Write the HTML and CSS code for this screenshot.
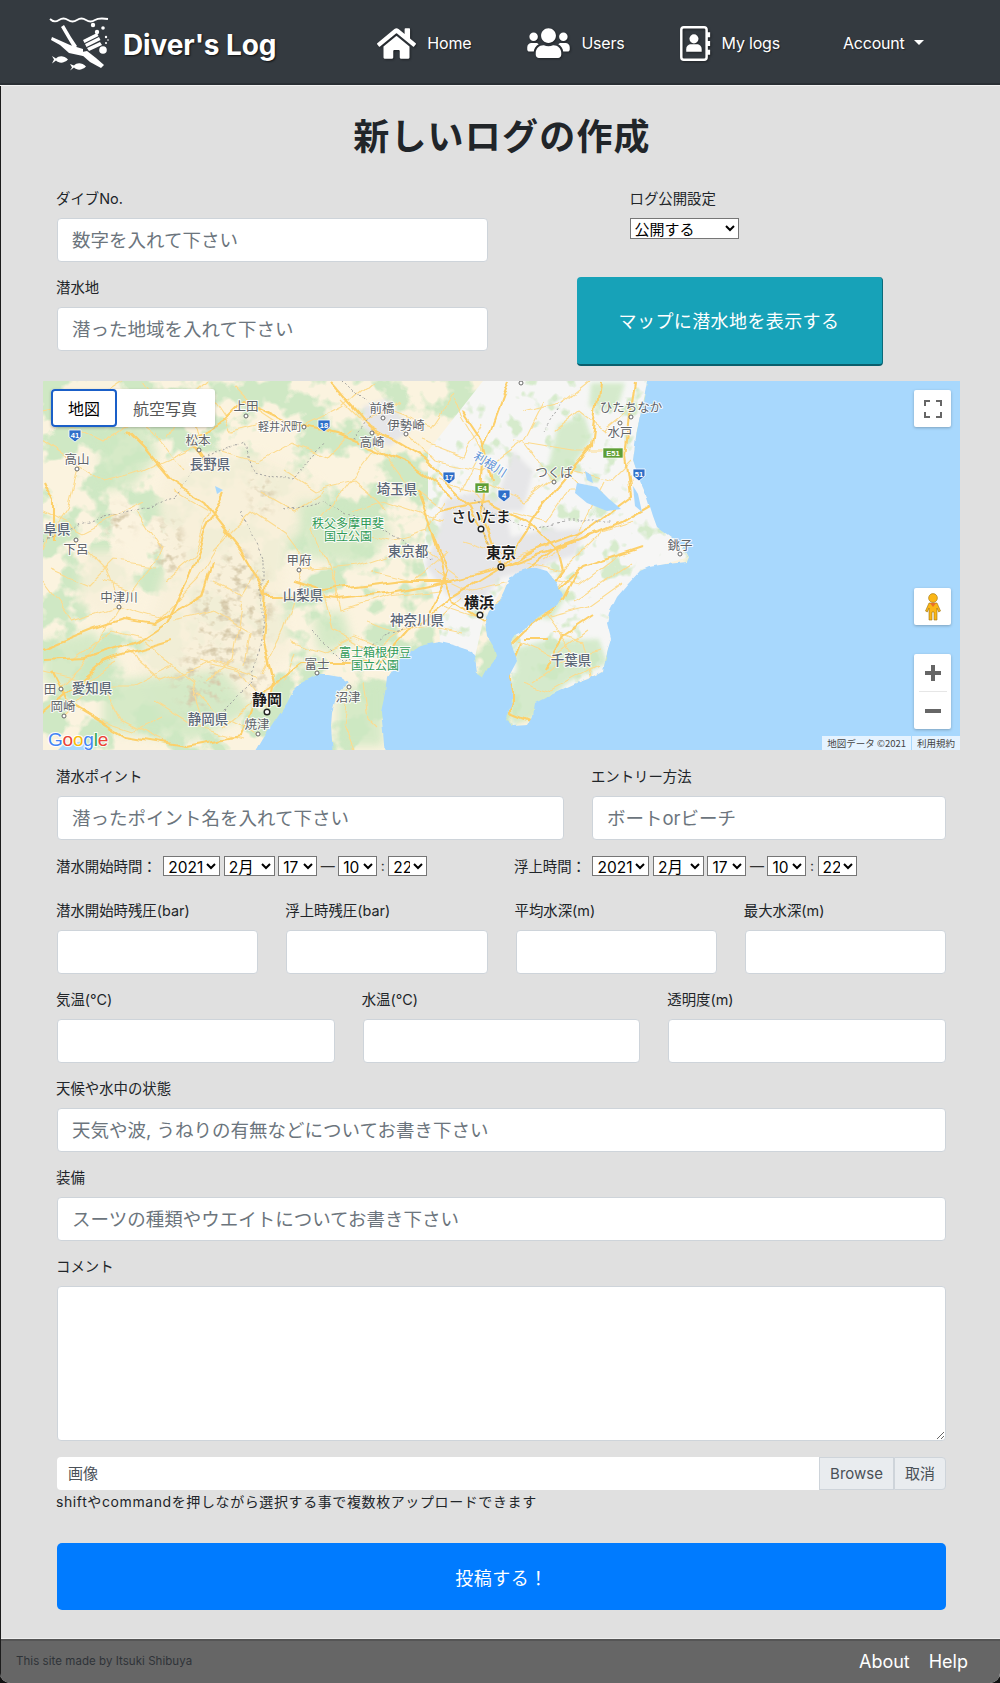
FILE: index.html
```html
<!DOCTYPE html>
<html lang="ja">
<head>
<meta charset="utf-8">
<title>Diver's Log</title>
<link rel="stylesheet" href="styles.css">
</head>
<body>
<div class="page">
<header class="nav">
  <a class="brand">
    <svg class="logo" viewBox="0 0 62 56">
      <path class="logo-wave" d="M2 4c3 3 6 3 9 1s6-2 9 0 6 2 9 0 6-2 9 0 6 2 9 0 6-2 13-1"/>
      <g class="logo-fill">
        <circle cx="45" cy="10" r="2.2"/><circle cx="55" cy="13" r="1.8"/><circle cx="49" cy="17" r="2.2"/><circle cx="58" cy="22" r="1.2"/><circle cx="58" cy="28" r="1"/><circle cx="60" cy="25" r=".8"/>
        <circle cx="55" cy="35" r="3.8"/>
        <path d="M13 12l3-2 7 12 6 9-3 3-6-10z"/>
        <path d="M3 25l1-3 18 8 13 4 0 7-14-3-9-8z"/>
        <path d="M35 25l14-7 1.500 3-14 7zM37 29l14-7 1.500 3-14 7zM39 33l13-6 2 3-13 6z"/>
        <path d="M34 37l5-1 9 7 8 7-3 3-11-6-8-7z"/>
        <path d="M4 41l4 2.500c3-3 8-3 12 1-4 4-9 4-12 1l-4 3 2-4z"/>
        <path d="M22 49l4 1.500c3-3 8-3 12 1-4 4-9 4-12 1l-4 3 2-3z"/>
      </g>
    </svg>
    <span class="brand-name">Diver's Log</span>
  </a>
  <nav class="nav-links">
    <a class="nav-item nav-home">
      <svg class="icon-home" viewBox="0 0 576 512"><path d="M280.37 148.26L96 300.11V464a16 16 0 0 0 16 16l112.06-.29a16 16 0 0 0 15.92-16V368a16 16 0 0 1 16-16h64a16 16 0 0 1 16 16v95.64a16 16 0 0 0 16 16.05L464 480a16 16 0 0 0 16-16V300L295.67 148.26a12.19 12.19 0 0 0-15.3 0zM571.6 251.47L488 182.56V44.05a12 12 0 0 0-12-12h-56a12 12 0 0 0-12 12v72.61L318.47 43a48 48 0 0 0-61 0L4.34 251.47a12 12 0 0 0-1.6 16.9l25.5 31A12 12 0 0 0 45.15 301l235.22-193.74a12.19 12.19 0 0 1 15.3 0L530.9 301a12 12 0 0 0 16.9-1.6l25.5-31a12 12 0 0 0-1.7-16.93z"/></svg>
      <span>Home</span>
    </a>
    <a class="nav-item nav-users">
      <svg class="icon-users" viewBox="0 0 640 512"><path d="M96 224c35.3 0 64-28.7 64-64s-28.7-64-64-64-64 28.7-64 64 28.7 64 64 64zm448 0c35.3 0 64-28.7 64-64s-28.7-64-64-64-64 28.7-64 64 28.7 64 64 64zm32 32h-64c-17.6 0-33.5 7.1-45.1 18.6 40.3 22.1 68.9 62 75.1 109.4h66c17.7 0 32-14.3 32-32v-32c0-35.3-28.7-64-64-64zm-256 0c61.9 0 112-50.1 112-112S381.9 32 320 32 208 82.1 208 144s50.1 112 112 112zm76.8 32h-8.3c-20.8 10-43.9 16-68.5 16s-47.6-6-68.5-16h-8.3C179.6 288 128 339.6 128 403.2V432c0 26.5 21.5 48 48 48h288c26.5 0 48-21.5 48-48v-28.8c0-63.6-51.6-115.2-115.2-115.2zm-223.7-13.4C161.5 263.1 145.6 256 128 256H64c-35.3 0-64 28.7-64 64v32c0 17.7 14.3 32 32 32h65.9c6.3-47.4 34.9-87.3 75.2-109.4z"/></svg>
      <span>Users</span>
    </a>
    <a class="nav-item nav-logs">
      <svg class="icon-logs" viewBox="0 0 30 34">
        <rect class="book" x="1.2" y="1.2" width="24.6" height="31.6" rx="2.5"/>
        <path d="M26 6h3.200v5H26zM26 14.500h3.200v5H26zM26 23h3.200v5H26z"/>
        <circle cx="13.500" cy="12.500" r="4.400"/>
        <path d="M6 25v-2.500c0-3 2.400-4.700 4.600-4.700h5.800c2.200 0 4.600 1.700 4.600 4.700V25z"/>
      </svg>
      <span>My logs</span>
    </a>
    <a class="nav-item nav-account"><span>Account</span><i class="caret"></i></a>
  </nav>
</header>

<main class="content">
  <h1 class="title">新しいログの作成</h1>
  <form class="log-form">
    <div class="top-grid">
      <div class="top-left">
        <div class="field"><label class="lbl">ダイブNo.</label><input class="ctl" placeholder="数字を入れて下さい"></div>
        <div class="field"><label class="lbl">潜水地</label><input class="ctl" placeholder="潜った地域を入れて下さい"></div>
      </div>
      <div class="top-right">
        <div class="publish"><label class="lbl">ログ公開設定</label><select class="sel-publish"><option>公開する</option><option>公開しない</option></select></div>
        <button type="button" class="map-btn">マップに潜水地を表示する</button>
      </div>
    </div>

    <div class="map">
      <svg class="map-svg" viewBox="0 0 917 369" preserveAspectRatio="none">
        <defs>
          <filter id="soft" x="-10%" y="-10%" width="120%" height="120%"><feGaussianBlur stdDeviation="5"/></filter>
          <filter id="softer" x="-10%" y="-10%" width="120%" height="120%"><feGaussianBlur stdDeviation="2"/></filter>
          <filter id="patches" x="0" y="0" width="100%" height="100%" color-interpolation-filters="sRGB">
            <feTurbulence type="fractalNoise" baseFrequency="0.028" numOctaves="4" seed="11"/>
            <feColorMatrix values="0 0 0 0 .81  0 0 0 0 .91  0 0 0 0 .77  9 0 0 0 -4.3"/>
          </filter>
          <filter id="patches-east" x="0" y="0" width="100%" height="100%" color-interpolation-filters="sRGB">
            <feTurbulence type="fractalNoise" baseFrequency="0.05" numOctaves="3" seed="4"/>
            <feColorMatrix values="0 0 0 0 .84  0 0 0 0 .92  0 0 0 0 .80  9 0 0 0 -5.3"/>
          </filter>
          <filter id="ridges" x="0" y="0" width="100%" height="100%" color-interpolation-filters="sRGB">
            <feTurbulence type="fractalNoise" baseFrequency="0.09 0.12" numOctaves="3" seed="3"/>
            <feColorMatrix values="0 0 0 0 .84  0 0 0 0 .79  0 0 0 0 .67  4 0 0 0 -2"/>
          </filter>
          <filter id="wiggle" x="-2%" y="-2%" width="104%" height="104%">
            <feTurbulence type="fractalNoise" baseFrequency="0.035" numOctaves="2" seed="9" result="n"/>
            <feDisplacementMap in="SourceGraphic" in2="n" scale="12" xChannelSelector="R" yChannelSelector="G"/>
          </filter>
          <filter id="coast" x="-2%" y="-2%" width="104%" height="104%">
            <feTurbulence type="fractalNoise" baseFrequency="0.09" numOctaves="2" seed="2" result="n"/>
            <feDisplacementMap in="SourceGraphic" in2="n" scale="4" xChannelSelector="R" yChannelSelector="G"/>
          </filter>
          <mask id="ridge-mask"><path class="mask-w" filter="url(#soft)" d="M165 190l30-25 25 25 10 45-20 50-35 35-30 10-15-30 20-40 5-40zM112 140l22 0 10 35-15 20-20-15zM205 90l25 10 0 30-20 0zM60 130l25-5 5 25-20 10zM200 300l30-10 0 20-25 10z"/></mask>
          <mask id="east-mask"><path class="mask-w" d="M385 70L440 0H605L594 49 590 79 604 116 628 156 646 176 597 190 565 268 560 290 534 302 500 318 470 345 468 262 464 200 440 240 432 276 397 261 395 230 380 180 385 120z"/></mask>
        </defs>
        <rect class="m-land" width="917" height="369"/>
        <rect class="m-noise" filter="url(#patches)" width="917" height="369"/>
        <path class="m-cream" filter="url(#soft)" d="M125 80l90 -10 60 30 10 40-40 20-5 60 10 50-60 50-70 20-25-50 10-50 20-60-10-60zM40 170l40 0 15 40-30 30-30-20z"/>
        <path class="m-greenb" filter="url(#soft)" d="M55 45l45-10 15 40-25 30-30 5zM255 120l70 5 25 25-30 35-60-10zM270 235l30-5 10 35-35 5zM60 300l120 -10 30 40-60 30-90 -10zM295 310l45 -10 0 65-45 0zM0 260l50-10 30 40-50 20-30-10z"/>
        <rect class="m-noise2" filter="url(#ridges)" mask="url(#ridge-mask)" width="917" height="369"/>
        <path class="m-east" d="M385 70L440 0H605L594 49 590 79 604 116 628 156 646 176 597 190 565 268 560 290 534 302 500 318 470 345 468 262 464 200 440 240 432 276 397 261 395 230 380 180 385 120z"/>
        <g mask="url(#east-mask)"><rect class="m-noise" filter="url(#patches-east)" width="917" height="369"/></g>
        <path class="m-gray" filter="url(#softer)" d="M402 118l36-8 24 18 6 28 44-10 6 24-20 18-40 8-24 30-30-12-22-30 14-34zM320 26l24-8 24 30-22 18-24-18zM505 150l36-2-8 26-36 10zM450 130l20-60 20 20-10 40z"/>
        <path class="m-greenb" filter="url(#softer)" d="M470 268l30-8 56-2 8 24-40 20-36 36-18 6-8-30 12-26zM515 44l26-10 8 24-26 36-18-8zM548 2l34 0-8 26-28-2zM490 235l22-30 14 6-18 28z"/>

        <g filter="url(#wiggle)">
          <g class="m-minor">
            <path d="M0 60L30 80 60 100 100 90 155 65M34 88L24 128 4 158 0 168M33 159L63 189 76 226M76 226L116 238 156 198 186 148M0 130L40 150 100 120M110 50L140 90M155 60L145 20 165 0M0 200L30 240 76 226M76 226L46 276 16 306M156 280L196 290 226 330M100 260L150 300 160 340M60 300L80 340 120 360M170 170L210 130 240 150 270 190M256 190L316 185 376 165 416 195M280 210L290 250 330 270 370 240M300 220L270 150 300 110 330 70M330 60L360 100 400 130M240 46L210 26 190 6M260 46L300 26 330 0M360 50L390 80 440 90 480 60M400 140L340 120 310 130M260 190L240 250 220 290M200 220L190 280 160 300M30 280L70 250 110 260M20 335L50 305 90 305 130 285M215 353L175 333 155 313M305 305L300 345 310 369M320 305L325 335 335 345M440 100L480 120 520 90 550 120M510 100L480 60 500 20M480 180L520 190 560 150 590 140M470 60L530 70 560 70M410 20L440 70 420 110M520 200L500 230 530 270M530 220L560 200 590 180M510 250L540 260 550 300M490 300L520 280 560 270M560 100L530 160 500 180"/>
            <path d="M0 30L50 20 80 0M20 40L60 60 90 40 120 60M100 0L120 30 170 20 190 50 230 40M180 70L215 80 250 60 285 75 310 50M130 110L165 130 150 175 120 200M95 130L120 170 90 210 60 200M10 190L45 205 70 180 115 185M170 200L200 215 215 190M130 240L170 230 205 250 200 285M85 270L120 300 170 280 215 295M0 290L40 300 75 280M110 320L150 345 200 360M240 90L270 110 310 100 345 130M215 110L250 130 280 110M300 150L350 160 385 150 400 120M330 190L370 200 405 170M290 190L300 230 345 215 395 210M320 240L355 250 395 240 420 215M250 260L280 270 310 255 345 270M240 300L250 270M350 30L390 45 410 15M380 60L420 75 440 40M395 100L430 110 450 140M470 130L505 140 525 110 560 110M510 50L535 30 560 50 585 30M530 90L570 100 590 80M480 30L520 20 545 0M420 160L470 175 505 165M390 190L430 210 470 200M400 225L430 235 465 215M495 195L535 205 575 175M505 235L545 225 580 200M475 260L510 275 545 250M480 300L510 310 555 285M395 245L420 250M300 20L320 40 360 20M180 345L210 320 235 300M60 340L90 350 120 335M125 55L135 35 165 40"/>
          </g>
          <g class="m-major">
            <path d="M458 186L438 126 442 66 466 0M458 186L498 126 548 66 556 0M458 186L428 126 378 76 328 46 288 0"/>
            <path d="M458 186L398 202 348 212 298 218 248 214 223 214 198 170 158 120 128 100 103 70 83 50"/>
            <path d="M180 112L160 152 148 192 123 242 93 262 43 278 0 280"/>
            <path d="M170 90L150 60 180 40 200 20 250 44 295 54 325 66 370 86 410 116"/>
            <path d="M458 186L408 216 368 246 338 281 288 281 258 281 238 296 213 316 198 356 143 366 83 356 23 320 8 290"/>
            <path d="M458 186L498 166 548 146 588 116 583 76 588 36 593 0"/>
            <path d="M458 186L518 166 578 141 613 121M475 195L515 165 555 150M490 235L510 215 540 185 570 175 600 165"/>
            <path d="M440 240L470 215 485 190M480 250L465 265 455 295M480 250L520 220 535 190M478 262L468 287 468 332 488 340M505 258L480 258"/>
            <path d="M390 150L400 190 410 220 440 240M395 130L445 120 485 140 515 170 520 190 505 210M375 110L405 190 385 230"/>
            <path d="M0 268L50 248 80 238 110 243 160 213 170 183M0 330L60 280 130 260"/>
            <path d="M225 200L220 260 230 300 225 325M250 200L280 210 360 200 410 200M0 100L10 120 10 160"/>
            <path d="M500 290L520 255 550 235M420 30L440 60 450 100"/>
          </g>
        </g>
        <path class="m-border" filter="url(#wiggle)" d="M0 160L40 140 90 130 130 120 160 80 200 60 210 90 250 100 280 60M200 130L220 180 220 240 210 300 170 340M240 130L280 120 340 150 390 180M270 250L300 280 340 255 380 240M430 120L490 150 520 140 570 140M440 150L460 190M300 0L330 30 310 60M520 20L500 50"/>

        <g filter="url(#coast)">
          <path class="m-sea" d="M605 -5L600 22 594 49 590 79 597 100 604 116 610 135 614 146 628 156 640 166 646 176 644 181 624 183 606 186 597 190 585 203 574 216 566 232 564 242 568 258 565 268 560 290 545 298 534 302 512 312 492 322 490 335 485 344 470 345 462 338 468 325 470 315 466 295 474 280 468 262 470 256 482 250 490 240 498 234 514 224 520 214 514 202 504 190 490 186 474 191 465 200 461 210 455 222 446 230 442 240 444 255 452 268 454 275 446 285 440 296 434 292 432 276 428 270 410 264 397 261 380 264 364 272 352 284 344 296 342 312 338 330 340 350 342 375L290 375 288 345 289 332 294 312 306 302 297 296 285 294 274 294 258 302 250 310 244 322 232 340 220 358 210 375L925 375 925 -5z"/>
        </g>
        <path class="m-sea" d="M534 102l20 4 12 12 12 10-14 2-20-8-12-10zM590 105l5 8 4 18-7-6zM172 105l8 4-6 4zM20 364l20-4 8 9H15zM542 90l6 4 2 8-6-3z"/>

        <g class="m-dots">
          <circle cx="203" cy="35" r="2"/><circle cx="261" cy="46" r="2"/><circle cx="340" cy="37" r="2"/><circle cx="363" cy="53" r="2"/><circle cx="329" cy="52" r="2"/><circle cx="156" cy="69" r="2"/><circle cx="34" cy="88" r="2"/><circle cx="256" cy="189" r="2"/><circle cx="76" cy="226" r="2"/><circle cx="33" cy="159" r="2"/><circle cx="274" cy="292" r="2"/><circle cx="306" cy="306" r="2"/><circle cx="18" cy="308" r="2"/><circle cx="21" cy="335" r="2"/><circle cx="215" cy="353" r="2"/><circle cx="588" cy="36" r="2"/><circle cx="577" cy="42" r="2"/><circle cx="511" cy="101" r="2"/><circle cx="637" cy="173" r="2"/><circle cx="478" cy="2" r="2"/>
        </g>
        <g class="m-dots-big"><circle cx="438" cy="148" r="2.800"/><circle cx="437" cy="234" r="2.800"/><circle cx="224" cy="331" r="2.800"/><circle cx="458" cy="186" r="3"/></g>
        <circle class="m-capital" cx="458" cy="186" r="1.300"/>

        <g class="shield">
          <path d="M26 49h12v7l-6 5-6-5z"/><path d="M275 39h12v7l-6 5-6-5z"/><path d="M400 91h12v7l-6 5-6-5z"/><path d="M455 109h12v7l-6 5-6-5z"/><path d="M590 88h12v7l-6 5-6-5z"/>
        </g>
        <g class="shield-g"><rect x="432" y="102" width="14" height="10"/><rect x="560" y="67" width="20" height="10"/></g>
        <g class="shield-t">
          <text x="32" y="57">41</text><text x="281" y="47">18</text><text x="406" y="99">17</text><text x="461" y="117">4</text><text x="596" y="96">51</text><text x="439" y="110">E4</text><text x="570" y="75">E51</text>
        </g>

        <g class="t-city">
          <text x="203" y="30">上田</text><text x="237" y="50" class="t-sm">軽井沢町</text><text x="339" y="32">前橋</text><text x="363" y="49">伊勢崎</text><text x="329" y="66">高崎</text><text x="155" y="64">松本</text><text x="34" y="83">高山</text><text x="256" y="184">甲府</text><text x="76" y="221">中津川</text><text x="33" y="173">下呂</text><text x="274" y="288">富士</text><text x="305" y="321">沼津</text><text x="7" y="313">田</text><text x="20" y="330">岡崎</text><text x="214" y="348">焼津</text><text x="588" y="31">ひたちなか</text><text x="577" y="56">水戸</text><text x="511" y="96">つくば</text><text x="637" y="169">銚子</text>
        </g>
        <g class="t-pref">
          <text x="167" y="88">長野県</text><text x="354" y="113">埼玉県</text><text x="365" y="175">東京都</text><text x="260" y="219">山梨県</text><text x="374" y="244">神奈川県</text><text x="49" y="312">愛知県</text><text x="165" y="343">静岡県</text><text x="528" y="284">千葉県</text><text x="14" y="153">阜県</text>
        </g>
        <g class="t-major">
          <text x="438" y="141" class="t-medium">さいたま</text><text x="458" y="177">東京</text><text x="436" y="227">横浜</text><text x="224" y="324">静岡</text>
        </g>
        <g class="t-park">
          <text x="305" y="147">秩父多摩甲斐</text><text x="305" y="160">国立公園</text><text x="332" y="276">富士箱根伊豆</text><text x="332" y="289">国立公園</text>
        </g>
        <text class="t-river" transform="translate(445 87) rotate(32)">利根川</text>
        <text class="t-google" x="5" y="365"><tspan class="g-b">G</tspan><tspan class="g-r">o</tspan><tspan class="g-y">o</tspan><tspan class="g-b">g</tspan><tspan class="g-g">l</tspan><tspan class="g-r">e</tspan></text>
      </svg>

      <div class="map-type"><span class="mt-active">地図</span><span class="mt-off">航空写真</span></div>
      <div class="map-ctl map-full">
        <svg viewBox="0 0 18 18" class="ctl-ic"><path d="M1 6V1h5M12 1h5v5M17 12v5h-5M6 17H1v-5"/></svg>
      </div>
      <div class="map-ctl map-peg">
        <svg viewBox="0 0 16 28" class="peg"><circle cx="8" cy="5" r="4.400"/><path d="M4 10h8l3.500 8-1.800 1-1.700-4v12H9v-8H7v8H4V15l-1.700 4-1.800-1z"/><path class="peg-v" d="M5 10h6l-3 4z"/></svg>
      </div>
      <div class="map-ctl map-zoom">
        <button type="button" class="z-btn" aria-label="+"><svg viewBox="0 0 18 18" class="z-ic"><path d="M7 1h4v6h6v4h-6v6H7v-6H1V7h6z"/></svg></button>
        <i class="z-sep"></i>
        <button type="button" class="z-btn" aria-label="-"><svg viewBox="0 0 18 18" class="z-ic"><path d="M1 7h16v4H1z"/></svg></button>
      </div>
      <div class="map-attr"><span>地図データ ©2021</span><span>利用規約</span></div>
    </div>

    <div class="grid12">
      <div class="field span7"><label class="lbl">潜水ポイント</label><input class="ctl" placeholder="潜ったポイント名を入れて下さい"></div>
      <div class="field span5"><label class="lbl">エントリー方法</label><input class="ctl" placeholder="ボートorビーチ"></div>
    </div>

    <div class="times">
      <div class="time-group">
        <span class="lbl-inline">潜水開始時間：</span>
        <select class="s-year"><option>2021</option></select>
        <select class="s-month"><option>2月</option></select>
        <select class="s-num"><option>17</option></select>
        <span class="sep">—</span>
        <select class="s-num"><option>10</option></select>
        <span class="sep">:</span>
        <select class="s-num"><option>22</option></select>
      </div>
      <div class="time-group">
        <span class="lbl-inline">浮上時間：</span>
        <select class="s-year"><option>2021</option></select>
        <select class="s-month"><option>2月</option></select>
        <select class="s-num"><option>17</option></select>
        <span class="sep">—</span>
        <select class="s-num"><option>10</option></select>
        <span class="sep">:</span>
        <select class="s-num"><option>22</option></select>
      </div>
    </div>

    <div class="grid12">
      <div class="field span3"><label class="lbl">潜水開始時残圧(bar)</label><input class="ctl"></div>
      <div class="field span3"><label class="lbl">浮上時残圧(bar)</label><input class="ctl"></div>
      <div class="field span3"><label class="lbl">平均水深(m)</label><input class="ctl"></div>
      <div class="field span3"><label class="lbl">最大水深(m)</label><input class="ctl"></div>
    </div>
    <div class="grid12">
      <div class="field span4"><label class="lbl">気温(°C)</label><input class="ctl"></div>
      <div class="field span4"><label class="lbl">水温(°C)</label><input class="ctl"></div>
      <div class="field span4"><label class="lbl">透明度(m)</label><input class="ctl"></div>
    </div>
    <div class="field"><label class="lbl">天候や水中の状態</label><input class="ctl" placeholder="天気や波, うねりの有無などについてお書き下さい"></div>
    <div class="field"><label class="lbl">装備</label><input class="ctl" placeholder="スーツの種類やウエイトについてお書き下さい"></div>
    <div class="field field-text"><label class="lbl">コメント</label><textarea class="ctl ctl-area"></textarea></div>

    <div class="file">
      <div class="file-name">画像</div>
      <div class="file-btn file-browse">Browse</div>
      <div class="file-btn file-cancel">取消</div>
    </div>
    <p class="help">shiftやcommandを押しながら選択する事で複数枚アップロードできます</p>
    <button type="button" class="submit">投稿する！</button>
  </form>
</main>

<footer class="foot">
  <span class="foot-credit">This site made by Itsuki Shibuya</span>
  <span class="foot-links"><a>About</a><a>Help</a></span>
</footer>
</div>
</body>
</html>
```

FILE: styles.css
```css
* { box-sizing: border-box; }
html { background: #111; }
body {
  margin: 0;
  font-family: Inter, "Noto Sans CJK JP", sans-serif;
  color: #212529;
}
.page {
  position: relative;
  width: 1000px;
  height: 1683px;
  background: #e0e0e0;
  display: flex;
  flex-direction: column;
  border-radius: 0 0 10px 10px;
  overflow: hidden;
}
.page::after {
  content: "";
  position: absolute;
  inset: 0;
  pointer-events: none;
  box-shadow: inset 1px 0 0 #1c1c1c, inset 0 1px 0 #16181b;
}

/* nav */
.nav {
  height: 85px;
  flex: none;
  background: #343a40;
  border-bottom: 2px solid #2a2f34;
  box-shadow: 0 1px 0 #f2f2f2;
  display: flex;
  align-items: center;
  padding: 3px 0 0 48px;
  color: #fff;
  position: relative;
  z-index: 1;
}
.brand { display: flex; align-items: center; }
.logo { width: 62px; height: 56px; }
.logo-wave { fill: none; stroke: #fff; stroke-width: 1.8; }
.logo-fill { fill: #fff; }
.brand-name {
  font-size: 28px;
  font-weight: 700;
  margin: 3px 0 0 13px;
  letter-spacing: -0.1px;
  text-shadow: 1px 1px 2px rgba(0,0,0,.7);
}
.nav-links { display: flex; align-items: center; margin-left: 101px; }
.nav-item { display: flex; align-items: center; font-size: 16px; letter-spacing: -.2px; text-shadow: 1px 1px 1px rgba(0,0,0,.4); }
.nav-item svg { fill: #fff; filter: drop-shadow(1px 1px 1px rgba(0,0,0,.4)); }
.icon-home { width: 39px; height: 35px; margin-right: 11px; }
.icon-users { width: 43px; height: 34px; margin-right: 11px; }
.icon-logs { width: 31px; height: 35px; margin-right: 11px; }
.book { fill: none; stroke: #fff; stroke-width: 2.4; }
.nav-users { margin-left: 56px; }
.nav-logs { margin-left: 55px; }
.nav-account { margin-left: 63px; }
.caret {
  display: block;
  margin-left: 9px;
  margin-top: -2px;
  border-top: 5px solid #fff;
  border-left: 5px solid transparent;
  border-right: 5px solid transparent;
}

/* content */
.content { flex: 1; }
.title {
  margin: 27px 0 26px;
  padding-left: 4px;
  height: 50px;
  line-height: 50px;
  font-size: 36px;
  font-weight: 700;
  text-align: center;
  letter-spacing: 1.2px;
}
.log-form { padding: 0 54px 0 57px; }
.field { margin-bottom: 15px; }
.lbl {
  display: block;
  height: 22px;
  line-height: 22px;
  margin: 0 0 8px -1px;
  font-size: 14.4px;
}
.ctl {
  display: block;
  width: 100%;
  height: 44px;
  padding: 0 14px;
  border: 1px solid #ced4da;
  border-radius: 4px;
  background: #fff;
  font-family: inherit;
  font-size: 18.5px;
  color: #495057;
  outline: none;
}
.ctl::placeholder { color: #6c757d; opacity: 1; }
.ctl-area { height: 155px; }
.field-text { margin-bottom: 16px; }

.top-grid { display: grid; grid-template-columns: 430.5px 1fr; column-gap: 28px; }
.publish { margin-left: 115px; height: 89px; }
.sel-publish { display: block; width: 109px; height: 21px; margin-left: -1px; font-family: inherit; font-size: 15px; background: #fff; }
.map-btn {
  display: block;
  margin-left: 61px;
  padding-bottom: 3px;
  width: 306px;
  height: 89px;
  background: #17a2b8;
  border: 0;
  border-right: 1px solid #0c6a7a;
  border-bottom: 2px solid #0a5e6c;
  border-radius: 4px;
  color: #fff;
  font-family: inherit;
  font-size: 18px;
  letter-spacing: .4px;
}

/* map */
.map {
  position: relative;
  height: 369px;
  margin: 15px -14px 16px;
  overflow: hidden;
  background: #a8d8fd;
}
.map-svg { display: block; width: 100%; height: 100%; }
.mask-w { fill: #fff; }
.m-land { fill: #fbf3df; }
.m-cream { fill: #f8f0da; opacity: .85; }
.m-noise { fill: #fff; }
.m-noise2 { fill: #fff; }
.m-east { fill: #f6f6f5; }
.m-greenb { fill: #cde8c2; opacity: .8; }
.m-gray { fill: #e6e6e8; }
.m-sea { fill: #a8d8fd; }
.m-minor path { fill: none; stroke: #fddb8e; stroke-width: 1.1; }
.m-major path { fill: none; stroke: #fdd06a; stroke-width: 2.1; stroke-linejoin: round; }
.m-border { fill: none; stroke: #9a9a9a; stroke-width: .9; stroke-dasharray: 2 2.4; }
.m-dots circle { fill: #fff; stroke: #666; stroke-width: 1; }
.m-dots-big circle { fill: #fff; stroke: #222; stroke-width: 1.4; }
.m-capital { fill: #222; }
.shield path { fill: #2f6fc9; stroke: #fff; stroke-width: .8; }
.shield-g rect { fill: #5f9e35; stroke: #fff; stroke-width: .6; }
.shield-t text { fill: #fff; font-size: 7.5px; font-weight: 700; text-anchor: middle; font-family: "Liberation Sans", sans-serif; }
.t-city text, .t-pref text, .t-major text, .t-park text, .t-river {
  text-anchor: middle;
  paint-order: stroke;
  stroke: rgba(255,255,255,.85);
  stroke-width: 2px;
  stroke-linejoin: round;
  font-family: "Noto Sans CJK JP", sans-serif;
}
.t-city text { font-size: 12.5px; fill: #5f6368; }
.t-city .t-sm { font-size: 11px; }
.t-pref text { font-size: 13.5px; fill: #5d6878; font-weight: 500; }
.t-major text { font-size: 15px; fill: #1c1c1c; font-weight: 700; }
.t-major .t-medium { font-weight: 500; }
.t-park text { font-size: 12px; fill: #2f9a56; }
.t-river { font-size: 12px; fill: #5b91d8; }
.t-google {
  font-family: "Liberation Sans", sans-serif;
  font-size: 19px;
  letter-spacing: -.2px;
  paint-order: stroke;
  stroke: rgba(255,255,255,.9);
  stroke-width: 2px;
}
.g-b { fill: #4285f4; }
.g-r { fill: #ea4335; }
.g-y { fill: #fbbc05; }
.g-g { fill: #34a853; }

.map-type {
  position: absolute;
  left: 8px;
  top: 8px;
  display: flex;
  height: 38px;
  background: #fff;
  border-radius: 3px;
  box-shadow: 0 1px 3px rgba(0,0,0,.25);
  font-size: 16px;
  font-family: "Noto Sans CJK JP", sans-serif;
}
.map-type span { display: flex; align-items: center; justify-content: center; }
.mt-active { width: 66px; color: #000; border: 2px solid #1a5fc8; border-radius: 4px; }
.mt-off { width: 98px; padding-right: 2px; color: #565656; }
.map-ctl {
  position: absolute;
  right: 9px;
  width: 37px;
  background: #fff;
  border-radius: 2px;
  box-shadow: 0 1px 3px rgba(0,0,0,.25);
  display: flex;
  flex-direction: column;
  align-items: center;
  justify-content: center;
}
.map-full { top: 9px; height: 37px; }
.map-peg { top: 207px; height: 37px; }
.map-zoom { top: 273px; height: 75px; }
.ctl-ic { width: 18px; height: 18px; fill: none; stroke: #666; stroke-width: 2; }
.peg { width: 16px; height: 28px; fill: #fbb616; stroke: #9c7210; stroke-width: .6; }
.peg-v { fill: #e8702a; stroke: none; }
.z-btn { flex: 1; width: 100%; padding: 0; border: 0; background: none; display: flex; align-items: center; justify-content: center; }
.z-ic { width: 18px; height: 18px; fill: #666; }
.z-sep { display: block; width: 28px; height: 1px; background: #e6e6e6; }
.map-attr {
  position: absolute;
  right: 0;
  bottom: 0;
  height: 14px;
  display: flex;
  gap: 1px;
  font-size: 9.5px;
  line-height: 14px;
  color: #444;
  font-family: "Noto Sans CJK JP", sans-serif;
}
.map-attr span { background: rgba(255,255,255,.7); padding: 0 5px; }

/* rows */
.grid12 { display: grid; grid-template-columns: repeat(12, 1fr); column-gap: 28px; }
.span7 { grid-column: span 7; }
.span5 { grid-column: span 5; }
.span4 { grid-column: span 4; }
.span3 { grid-column: span 3; }

.times { display: grid; grid-template-columns: 458px 1fr; height: 20px; margin-bottom: 25px; margin-left: -1px; }
.time-group { display: flex; align-items: center; gap: 3.5px; }
.lbl-inline { font-size: 14.4px; margin-right: 3px; white-space: nowrap; }
.time-group select { height: 20px; padding: 0; font-family: inherit; font-size: 15.5px; background: #fff; }
.s-year { width: 57px; }
.s-month { width: 51px; }
.s-num { width: 39px; }
.sep { font-size: 14px; color: #333; }

.file { display: flex; height: 33px; }
.file-name {
  flex: 1;
  background: #fff;
  padding-left: 11px;
  line-height: 33px;
  font-size: 15px;
  color: #495057;
  border-radius: 4px 0 0 4px;
}
.file-btn {
  background: #e9ecef;
  border: 1px solid #ced4da;
  line-height: 31px;
  text-align: center;
  font-size: 15px;
  color: #495057;
}
.file-browse { width: 75px; }
.file-cancel { width: 52px; border-radius: 0 4px 4px 0; }
.help { margin: 1px 0 30px -1px; height: 22px; line-height: 22px; font-size: 14px; letter-spacing: .6px; }
.submit {
  display: block;
  width: 100%;
  height: 67px;
  background: #007bff;
  border: 0;
  border-radius: 5px;
  color: #fff;
  font-family: inherit;
  font-size: 18px;
  letter-spacing: .5px;
}

/* footer */
.foot {
  flex: none;
  height: 44px;
  background: #666;
  border-top: 2px solid #555;
  box-shadow: 0 -1px 0 #eee;
  display: flex;
  align-items: center;
  justify-content: space-between;
  padding: 0 32px 2px 16px;
}
.foot-credit { font-size: 11.5px; color: #2f3338; letter-spacing: .05px; }
.foot-links { display: flex; gap: 19px; font-size: 18px; color: #fff; }
```
